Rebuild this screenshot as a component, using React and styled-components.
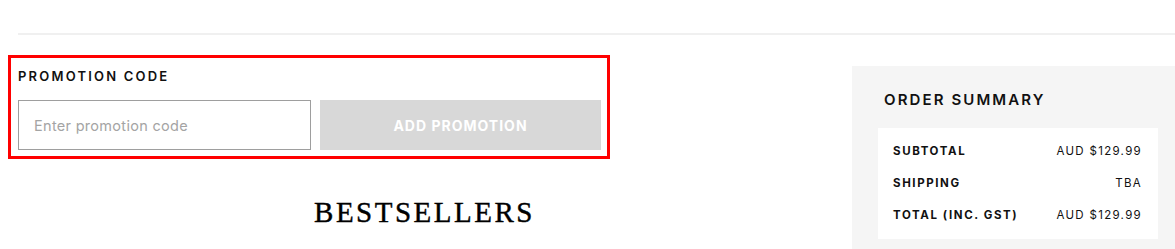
import React from 'react';
import styled, { createGlobalStyle } from 'styled-components';

const GlobalStyle = createGlobalStyle`
* {
  box-sizing: border-box;
}
body {
  margin: 0;
  background: #fff;
  font-family: Inter, "Liberation Sans", Arial, sans-serif;
  color: #111;
  overflow: hidden;
}
`;

const Page = styled.div`
  width: 1184px;
  height: 249px;
  padding-top: 33px;
`;

const Divider = styled.div`
  height: 2px;
  margin-left: 18px;
  background: #f0f0f0;
`;

const Main = styled.div`
  display: flex;
  align-items: flex-start;
  gap: 21px;
  padding-left: 8px;
`;

const LeftColumn = styled.div`
  width: 823px;
  display: flex;
  flex-direction: column;
`;

const PromoBox = styled.div`
  width: 602px;
  margin-top: 20px;
  border: 3px solid #ff0000;
  padding: 9px 6px 6px 7px;
`;

const Label = styled.div`
  font-size: 13px;
  font-weight: 600;
  letter-spacing: 2.2px;
  line-height: 18px;
  text-transform: uppercase;
  color: #111;
`;

const PromoRow = styled.div`
  display: flex;
  gap: 9px;
  margin-top: 15px;
`;

const PromoInput = styled.input`
  width: 293px;
  height: 50px;
  border: 1px solid #9e9e9e;
  padding: 0 15px;
  font-family: Inter, "Liberation Sans", Arial, sans-serif;
  font-size: 14.5px;
  letter-spacing: 0.3px;
  color: #111;
  outline: none;
  &::placeholder {
    color: #a4a4a4;
  }
`;

const PromoButton = styled.button`
  flex: 1;
  height: 50px;
  border: none;
  background: #d8d8d8;
  color: #fff;
  font-family: Inter, "Liberation Sans", Arial, sans-serif;
  font-size: 14px;
  font-weight: 700;
  letter-spacing: 1px;
  text-transform: uppercase;
`;

const Heading = styled.h2`
  margin: 37px 0 0 10px;
  text-align: center;
  font-family: "Liberation Serif", "DejaVu Serif", serif;
  font-weight: 400;
  font-size: 29px;
  letter-spacing: 2.5px;
  line-height: 32px;
  color: #000;
  -webkit-text-stroke: 0.4px #000;
`;

const Summary = styled.aside`
  width: 332px;
  margin-top: 31px;
  height: 183px;
  background: #f5f5f5;
  padding: 24px 26px 0 26px;
`;

const SummaryTitle = styled.div`
  padding-left: 6px;
  font-size: 15px;
  font-weight: 600;
  letter-spacing: 2.1px;
  line-height: 20px;
  text-transform: uppercase;
  color: #111;
`;

const SummaryBox = styled.div`
  margin-top: 18px;
  background: #fff;
  padding: 7px 16px 8px 15px;
`;

const SummaryRow = styled.div`
  display: flex;
  justify-content: space-between;
  align-items: center;
  height: 32px;
  font-size: 11.5px;
  letter-spacing: 1.3px;
`;

const RowLabel = styled.span`
  font-weight: 700;
  letter-spacing: 1.6px;
`;

const RowValue = styled.span`
  font-weight: 400;
`;

const rows = [
  ['Subtotal', 'AUD $129.99'],
  ['Shipping', 'TBA'],
  ['Total (inc. GST)', 'AUD $129.99'],
];

export default function App() {
  return (
    <Page>
      <GlobalStyle />
      <Divider />
      <Main>
        <LeftColumn>
          <PromoBox>
            <Label>Promotion code</Label>
            <PromoRow>
              <PromoInput placeholder="Enter promotion code" />
              <PromoButton disabled>Add promotion</PromoButton>
            </PromoRow>
          </PromoBox>
          <Heading>BESTSELLERS</Heading>
        </LeftColumn>
        <Summary>
          <SummaryTitle>Order summary</SummaryTitle>
          <SummaryBox>
            {rows.map(([label, value]) => (
              <SummaryRow key={label}>
                <RowLabel>{label.toUpperCase()}</RowLabel>
                <RowValue>{value}</RowValue>
              </SummaryRow>
            ))}
          </SummaryBox>
        </Summary>
      </Main>
    </Page>
  );
}
